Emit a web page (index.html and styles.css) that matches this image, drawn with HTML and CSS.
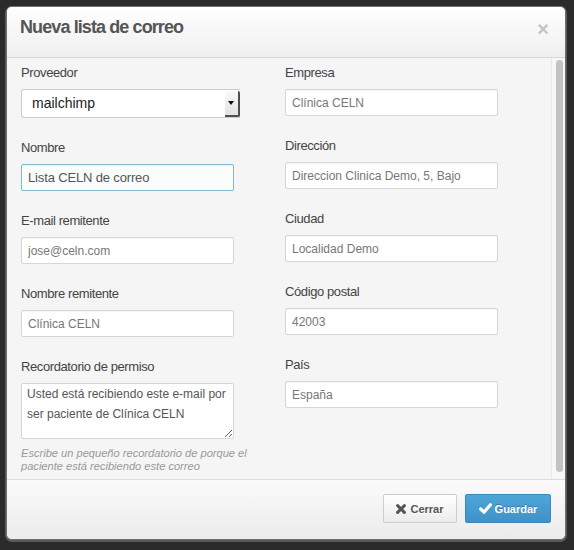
FILE: index.html
```html
<!DOCTYPE html>
<html lang="es">
<head>
<meta charset="utf-8">
<title>Nueva lista de correo</title>
<link rel="stylesheet" href="styles.css">
</head>
<body>
<div class="modal">
  <div class="modal-header">
    <h3 class="modal-title">Nueva lista de correo</h3>
    <span class="close">×</span>
  </div>
  <div class="modal-body">
    <form class="content">
      <div class="col">
        <div class="group">
          <label class="label">Proveedor</label>
          <div class="select"><span class="select-value">mailchimp</span><span class="select-arrow"></span></div>
        </div>
        <div class="group">
          <label class="label">Nombre</label>
          <input class="input input-focus" type="text" value="Lista CELN de correo">
        </div>
        <div class="group">
          <label class="label">E-mail remitente</label>
          <input class="input" type="text" value="jose@celn.com">
        </div>
        <div class="group">
          <label class="label">Nombre remitente</label>
          <input class="input" type="text" value="Clínica CELN">
        </div>
        <div class="group">
          <label class="label">Recordatorio de permiso</label>
          <textarea class="textarea">Usted está recibiendo este e-mail por ser paciente de Clínica CELN</textarea>
          <p class="help">Escribe un pequeño recordatorio de porque el paciente está recibiendo este correo</p>
        </div>
      </div>
      <div class="col">
        <div class="group">
          <label class="label">Empresa</label>
          <input class="input" type="text" value="Clínica CELN">
        </div>
        <div class="group">
          <label class="label">Dirección</label>
          <input class="input" type="text" value="Direccion Clinica Demo, 5, Bajo">
        </div>
        <div class="group">
          <label class="label">Ciudad</label>
          <input class="input" type="text" value="Localidad Demo">
        </div>
        <div class="group">
          <label class="label">Código postal</label>
          <input class="input" type="text" value="42003">
        </div>
        <div class="group">
          <label class="label">País</label>
          <input class="input" type="text" value="España">
        </div>
      </div>
    </form>
    <div class="scrollbar"><div class="thumb"></div></div>
  </div>
  <div class="modal-footer">
    <button class="btn btn-default" type="button">
      <svg class="icon" width="10" height="10" viewBox="0 0 10 10"><path d="M1.6 1.6 L8.4 8.4 M8.4 1.6 L1.6 8.4" stroke="#555" stroke-width="3" stroke-linecap="round" fill="none"/></svg>
      <span>Cerrar</span>
    </button>
    <button class="btn btn-primary" type="button">
      <svg class="icon" width="13" height="11" viewBox="0 0 13 11"><path d="M1.7 6 L5 9.2 L11.4 1.8" stroke="#fff" stroke-width="3.2" stroke-linecap="round" stroke-linejoin="round" fill="none"/></svg>
      <span>Guardar</span>
    </button>
  </div>
</div>
</body>
</html>
```

FILE: styles.css
```css
html, body {
  margin: 0;
}
body {
  padding: 6px;
  background: #2b2b2b;
  font-family: "Liberation Sans", Arial, sans-serif;
}
.modal {
  width: 560px;
  height: 534px;
  box-sizing: border-box;
  border: 1px solid #6e6e6e;
  border-radius: 6px;
  background: #f5f5f5;
  display: flex;
  flex-direction: column;
  overflow: hidden;
  box-shadow: 0 1px 0 1px #5a5a5a;
}
.modal-header {
  height: 51px;
  flex: none;
  box-sizing: border-box;
  border-bottom: 1px solid #d6d6d6;
  background: linear-gradient(#ffffff, #efefef);
  display: flex;
  justify-content: space-between;
  align-items: flex-start;
  padding: 9px 16px 0 13px;
}
.modal-title {
  margin: 0;
  font-size: 18px;
  line-height: 22px;
  font-weight: bold;
  color: #555;
  letter-spacing: -0.9px;
}
.close {
  font-size: 20px;
  line-height: 22px;
  font-weight: bold;
  color: #c4c4c4;
  margin-top: 2px;
}
.modal-body {
  flex: 1;
  display: flex;
  min-height: 0;
}
.content {
  flex: 1;
  margin: 0;
  padding: 7px 0 0 14px;
  display: grid;
  grid-template-columns: 250px 250px;
  column-gap: 14px;
  align-content: start;
}
.group {
  margin-bottom: 22px;
}
.label {
  display: block;
  font-size: 13px;
  line-height: 16px;
  color: #444;
  letter-spacing: -0.4px;
  margin-bottom: 8px;
}
.input {
  display: block;
  box-sizing: border-box;
  width: 213px;
  height: 27px;
  margin: 0;
  border: 1px solid #d6d6d6;
  border-radius: 2px;
  background: #fff;
  padding: 0 6px;
  font-family: "Liberation Sans", Arial, sans-serif;
  font-size: 12px;
  color: #777;
  box-shadow: inset 0 1px 1px rgba(0, 0, 0, 0.04);
  outline: none;
}
.input-focus {
  border-color: #82b8cf;
  background: #fbfcfc;
  color: #555;
  font-size: 13px;
  letter-spacing: -0.15px;
}
.select {
  display: flex;
  width: 219px;
  height: 29px;
  box-sizing: border-box;
  border: 1px solid #cdcdcd;
  border-right: none;
  border-radius: 3px 0 0 3px;
  background: #fff;
}
.select-value {
  flex: 1;
  padding-left: 10px;
  font-size: 14px;
  line-height: 27px;
  color: #222;
}
.select-arrow {
  width: 13px;
  margin-top: 1px;
  background: linear-gradient(#fbfbfb, #e2e2e2);
  border-right: 2px solid #505050;
  border-bottom: 2px solid #505050;
  border-radius: 0 2px 2px 0;
  display: flex;
  align-items: center;
  justify-content: center;
}
.select-arrow::after {
  content: "";
  width: 0;
  height: 0;
  border-left: 3px solid transparent;
  border-right: 3px solid transparent;
  border-top: 4px solid #111;
  margin-right: 1px;
}
.textarea {
  display: block;
  box-sizing: border-box;
  width: 213px;
  height: 56px;
  margin: 0;
  border: 1px solid #d6d6d6;
  border-radius: 2px;
  background: #fff;
  padding: 0 3px 0 5px;
  font-family: "Liberation Sans", Arial, sans-serif;
  font-size: 12px;
  line-height: 20px;
  color: #555;
  outline: none;
  overflow: hidden;
}
.help {
  margin: 8px 0 0;
  font-size: 11.1px;
  line-height: 13px;
  font-style: italic;
  color: #999;
}
.scrollbar {
  width: 14px;
  flex: none;
  box-sizing: border-box;
  border-left: 1px solid #e8e8e8;
  background: #f7f7f7;
  padding: 2px 2px 7px 4px;
  display: flex;
}
.thumb {
  flex: 1;
  background: #c2c2c2;
  border-radius: 4px;
}
.modal-footer {
  height: 60px;
  flex: none;
  box-sizing: border-box;
  border-top: 1px solid #dcdcdc;
  background: linear-gradient(#fbfbfb, #ebebeb);
  display: flex;
  justify-content: flex-end;
  align-items: flex-start;
  gap: 8px;
  padding: 14px 14px 0 0;
}
.btn {
  display: flex;
  align-items: center;
  justify-content: center;
  height: 29px;
  box-sizing: border-box;
  padding: 0;
  font-family: "Liberation Sans", Arial, sans-serif;
  font-size: 11px;
  font-weight: bold;
  border-radius: 2px;
}
.btn-default {
  width: 74px;
  gap: 4px;
  border: 1px solid #cdcdcd;
  background: linear-gradient(#ffffff, #ececec);
  color: #555;
  text-shadow: 0 1px 0 #fff;
}
.btn-primary {
  width: 86px;
  gap: 3px;
  border: 1px solid #3b88bd;
  background: linear-gradient(#4ea6d8, #3f92c9);
  color: #fff;
  text-shadow: 0 -1px 0 rgba(0, 0, 0, 0.25);
}
.icon {
  display: block;
}
```
